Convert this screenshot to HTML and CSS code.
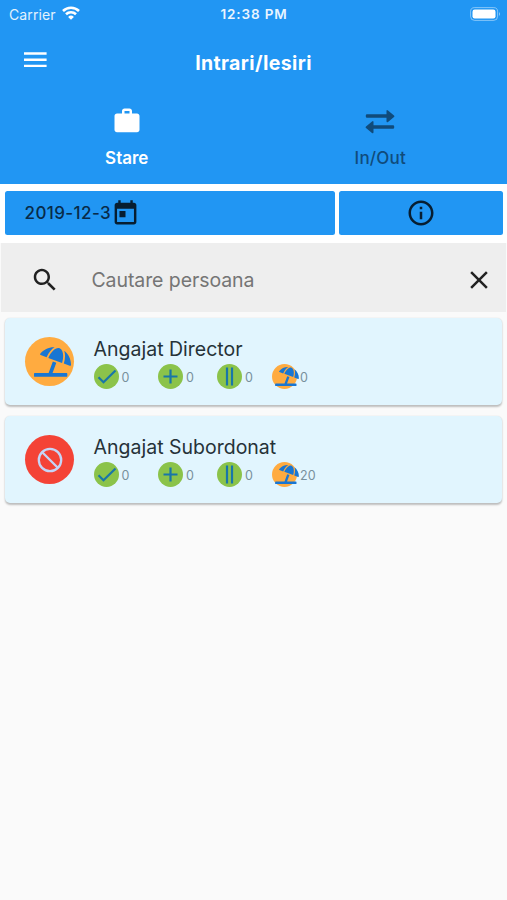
FILE: index.html
```html
<!DOCTYPE html>
<html lang="ro">
<head>
<meta charset="utf-8">
<title>Intrari/Iesiri</title>
<link rel="stylesheet" href="styles.css">
</head>
<body>
<svg class="defs" aria-hidden="true">
  <symbol id="beach" viewBox="0 0 640 512"><path d="M115.38 136.9l102.11 37.18c35.19-81.54 86.21-144.29 139-173.7-95.88-4.89-188.78 36.96-248.53 111.8-6.69 8.4-2.66 21.05 7.42 24.72zm132.25 48.16l238.48 86.83c35.76-121.38 18.7-231.66-42.63-253.98-7.4-2.7-15.13-4-23.09-4-58.02.01-128.27 69.17-172.76 171.15zM521.48 60.5c6.22 16.3 10.83 34.6 13.2 55.19 5.74 49.89-1.42 108.23-18.95 166.98l102.62 37.36c10.09 3.67 21.31-3.43 21.57-14.17 2.32-95.69-41.91-187.44-118.44-245.36zM560 447.98H321.06L386 269.5l-60.14-21.9-72.9 200.37H16c-8.84 0-16 7.16-16 16V496c0 8.84 7.16 16 16 16h544c8.84 0 16-7.16 16-16v-32c0-8.84-7.16-16-16-16.02z"/></symbol>
  <symbol id="check" viewBox="0 0 25 25"><path d="M4.5 13.200l5 5L21.500 6.500"/></symbol>
  <symbol id="plus" viewBox="0 0 25 25"><path d="M12.5 5.500v14M5.500 12.500h14"/></symbol>
  <symbol id="pause" viewBox="0 0 25 25"><path d="M10 3.500v18M15 3.500v18"/></symbol>
</svg>
<header class="header">
  <div class="status">
    <div class="carrier"><span>Carrier</span>
      <svg width="18" height="14" viewBox="0 0 18 14" fill="none" stroke="#fff" stroke-width="2.6"><path d="M1 5a11.5 11.5 0 0 1 16 0M4 8.3a7.2 7.2 0 0 1 10 0"/><path d="M9 13.8L6.1 10.9a4.1 4.1 0 0 1 5.8 0z" fill="#fff" stroke="none"/></svg>
    </div>
    <div class="time">12:38 PM</div>
    <div class="battery"><svg width="31" height="14" viewBox="0 0 31 14"><rect x=".6" y=".6" width="27" height="12.8" rx="4" fill="none" stroke="#fff" stroke-opacity=".45"/><rect x="2.5" y="2.5" width="23" height="9" rx="2.2" fill="#fff"/><path d="M29 5q2 2 0 4z" fill="#fff" opacity=".5"/></svg></div>
  </div>
  <div class="appbar">
    <svg class="menu" width="23" height="16" viewBox="0 0 23 16" fill="#fff"><path d="M0 .3h22.6v2.4H0zM0 6.5h22.6v2.4H0zM0 12.7h22.6v2.4H0z"/></svg>
    <h1>Intrari/Iesiri</h1>
  </div>
  <nav class="tabs">
    <div class="tab active">
      <svg width="30" height="30" viewBox="0 0 24 24" fill="currentColor"><path d="M20 6h-4V4c0-1.110-.89-2-2-2h-4c-1.110 0-2 .89-2 2v2H4c-1.110 0-1.990.89-1.990 2L2 19c0 1.110.89 2 2 2h16c1.110 0 2-.89 2-2V8c0-1.110-.89-2-2-2zm-6 0h-4V4h4v2z"/></svg>
      <span>Stare</span>
    </div>
    <div class="tab inout">
      <svg width="30" height="30" viewBox="0 0 30 30" fill="currentColor"><path d="M2 8.300h19.500V5.200Q21.500 3.200 23 4.500l6 5Q30 10.200 29 11l-6 5q-1.500 1-1.500-1v-3.200H2q-1.200 0-1.200-1.200V9.500Q.8 8.300 2 8.300zM28 19.300H8.500v-3.100q0-2-1.500-.7l-6 5Q0 21.200 1 22l6 5q1.500 1 1.500-1v-3.200H28q1.200 0 1.200-1.200v-1.100q0-1.200-1.200-1.200z"/></svg>
      <span>In/Out</span>
    </div>
  </nav>
</header>
<main>
  <div class="filters">
    <div class="date"><span>2019-12-3</span>
      <svg width="29" height="29" viewBox="0 0 24 24"><path d="M19 3h-1V1h-2v2H8V1H6v2H5c-1.110 0-1.990.9-1.990 2L3 19c0 1.100.89 2 2 2h14c1.100 0 2-.9 2-2V5c0-1.100-.9-2-2-2zm0 16H5V8h14v11zM7 10h5v5H7z"/></svg>
    </div>
    <div class="info"><svg width="30" height="30" viewBox="0 0 24 24"><path d="M11 7h2v2h-2zm0 4h2v6h-2zm1-9C6.480 2 2 6.480 2 12s4.480 10 10 10 10-4.480 10-10S17.520 2 12 2zm0 18c-4.410 0-8-3.590-8-8s3.590-8 8-8 8 3.590 8 8-3.590 8-8 8z"/></svg></div>
  </div>
  <div class="search">
    <svg class="lens" width="30" height="30" viewBox="0 0 24 24"><path d="M15.500 14h-.79l-.28-.27C15.410 12.590 16 11.110 16 9.500 16 5.910 13.090 3 9.500 3S3 5.910 3 9.500 5.910 16 9.500 16c1.610 0 3.090-.59 4.230-1.570l.27.28v.79l5 4.990L20.490 19l-4.990-5zm-6 0C7.010 14 5 11.990 5 9.500S7.010 5 9.500 5 14 7.010 14 9.500 11.990 14 9.500 14z"/></svg>
    <span class="hint">Cautare persoana</span>
    <svg class="clear" width="30" height="30" viewBox="0 0 24 24"><path d="M19 6.410L17.590 5 12 10.590 6.410 5 5 6.410 10.590 12 5 17.590 6.410 19 12 13.410 17.590 19 19 17.590 13.410 12z"/></svg>
  </div>
  <section class="card">
    <div class="avatar vacation"><svg width="37" height="30"><use href="#beach"/></svg></div>
    <div class="body">
      <h2>Angajat Director</h2>
      <div class="stats">
        <div class="stat"><i class="dot"><svg><use href="#check"/></svg></i><span>0</span></div>
        <div class="stat"><i class="dot"><svg><use href="#plus"/></svg></i><span>0</span></div>
        <div class="stat"><i class="dot"><svg><use href="#pause"/></svg></i><span>0</span></div>
        <div class="stat"><i class="dot sun"><svg><use href="#beach"/></svg></i><span>0</span></div>
      </div>
    </div>
  </section>
  <section class="card">
    <div class="avatar blocked"><svg width="26" height="26" viewBox="0 0 26 26" fill="none" stroke="#c5d5f7" stroke-width="2.300"><circle cx="13" cy="13" r="11.200"/><path d="M5 5l16 16"/></svg></div>
    <div class="body">
      <h2>Angajat Subordonat</h2>
      <div class="stats">
        <div class="stat"><i class="dot"><svg><use href="#check"/></svg></i><span>0</span></div>
        <div class="stat"><i class="dot"><svg><use href="#plus"/></svg></i><span>0</span></div>
        <div class="stat"><i class="dot"><svg><use href="#pause"/></svg></i><span>0</span></div>
        <div class="stat"><i class="dot sun"><svg><use href="#beach"/></svg></i><span>20</span></div>
      </div>
    </div>
  </section>
</main>
</body>
</html>
```
FILE: styles.css
```css
* { box-sizing: border-box; }
body { margin: 0; min-height: 900px; background: #fafafa; font-family: Inter, "Liberation Sans", sans-serif; color: #263238; }
h1, h2 { margin: 0; }
svg { display: block; flex: none; }
.defs { width: 0; height: 0; position: absolute; }
.header { height: 184px; background: #2196f3; color: #fff; }
.status { height: 27px; display: grid; grid-template-columns: 1fr auto 1fr; align-items: center; padding: 0 6px 0 9px; font-size: 14px; line-height: 27px; }
.carrier { display: flex; gap: 6px; align-items: center; color: #e3f2fd; letter-spacing: .1px; }
.carrier svg { margin-top: -2px; }
.time { font-weight: 600; font-size: 13.500px; letter-spacing: .85px; color: #e9f5ff; padding-top: 1px; margin-left: -2px; }
.battery { display: flex; justify-content: flex-end; }
.appbar { height: 70px; display: grid; grid-template-columns: 60px 1fr 60px; align-items: center; }
.menu { margin: -4px 0 0 24px; }
h1 { font-size: 19.500px; font-weight: 700; text-align: center; line-height: 24px; letter-spacing: .38px; padding-top: 1px; }
.tabs { display: grid; grid-template-columns: 1fr 1fr; }
.tab { display: flex; flex-direction: column; align-items: center; padding-top: 9px; font-size: 17px; font-weight: 600; line-height: 24px; }
.tab span { margin-top: 10px; }
.inout { color: #104b7b; font-weight: 500; }
.inout span { letter-spacing: .2px; }
.filters { height: 59px; background: #fff; padding: 7.400px 4px 7.500px 4.500px; display: grid; grid-template-columns: 330px 1fr; gap: 4px; }
.date, .info { height: 44px; background: #2196f3; border-radius: 2.500px; display: flex; align-items: center; fill: #071e31; color: #082b49; }
.date { padding-left: 20px; font-size: 17px; font-weight: 500; letter-spacing: .4px; }
.info { justify-content: center; }
.search { height: 69px; margin: 0 1px 0 1.400px; background: #eee; display: flex; align-items: center; padding: 4px 12.500px 0 29px; fill: #212121; }
.hint { margin-left: 31px; flex: 1; font-size: 19.500px; letter-spacing: -.08px; color: #757575; }
.card { height: 87px; margin: 6px 4.600px 11px 5.400px; background: #e1f5fe; border-radius: 5px; box-shadow: 0 1.500px 2px rgba(0,0,0,.24), 0 0 2px rgba(0,0,0,.06); display: flex; padding: 19px 0 0 19.700px; }
.avatar { width: 49px; height: 49px; border-radius: 50%; display: grid; place-items: center; }
.vacation { background: #ffab40; fill: #1976d2; }
.vacation svg { margin-left: 6px; }
.blocked { background: #f44336; }
.body { margin-left: 19.500px; }
h2 { font-size: 19.500px; font-weight: 400; line-height: 24px; }
.stats { display: grid; grid-template-columns: 64.500px 59px 55px auto; margin-top: 3px; }
.stat { display: flex; align-items: center; font-size: 12.500px; color: #78909c; }
.stat span { margin: 1px 0 0 3px; }
.dot { width: 25px; height: 25px; border-radius: 50%; background: #8bc34a; }
.dot svg { width: 25px; height: 25px; fill: none; stroke: #1976a8; stroke-width: 2.200; }
.sun { background: #ffab40; display: flex; align-items: center; }
.sun svg { width: 24px; height: 19px; margin-left: 2.500px; fill: #1976d2; stroke: none; }
```
